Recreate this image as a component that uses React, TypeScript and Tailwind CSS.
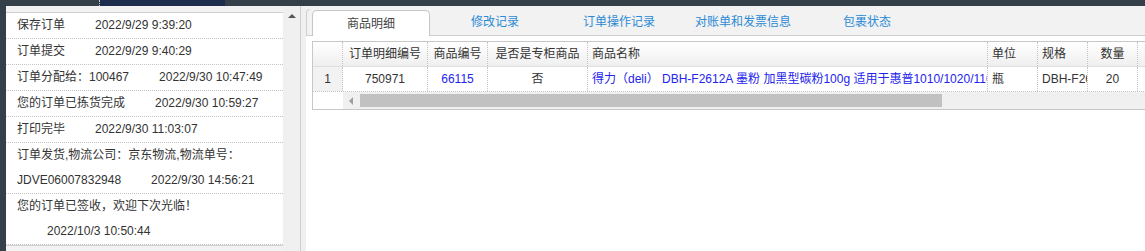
import React from "react";

const logs: { text: string; time: string; mode?: "wrapText" | "wrapTime"; second?: string }[] = [
  { text: "保存订单", time: "2022/9/29 9:39:20" },
  { text: "订单提交", time: "2022/9/29 9:40:29" },
  { text: "订单分配给：100467", time: "2022/9/30 10:47:49" },
  { text: "您的订单已拣货完成", time: "2022/9/30 10:59:27" },
  { text: "打印完毕", time: "2022/9/30 11:03:07" },
  { text: "订单发货,物流公司：京东物流,物流单号：", second: "JDVE06007832948", time: "2022/9/30 14:56:21", mode: "wrapText" },
  { text: "您的订单已签收，欢迎下次光临！", time: "2022/10/3 10:50:44", mode: "wrapTime" },
];

const tabs = ["商品明细", "修改记录", "订单操作记录", "对账单和发票信息", "包裹状态"];

const cols = [
  { w: "w-[30px]", title: "", align: "text-center" },
  { w: "w-[85px]", title: "订单明细编号", align: "text-center" },
  { w: "w-[60px]", title: "商品编号", align: "text-center" },
  { w: "w-[100px]", title: "是否是专柜商品", align: "text-center" },
  { w: "w-[400px]", title: "商品名称", align: "text-left pl-[4px]" },
  { w: "w-[50px]", title: "单位", align: "text-left pl-[4px]" },
  { w: "w-[50px]", title: "规格", align: "text-left pl-[4px]" },
  { w: "w-[50px]", title: "数量", align: "text-center" },
  { w: "w-[80px]", title: "", align: "text-center" },
];

const row = [
  { v: "1", c: "text-[#333]" },
  { v: "750971", c: "text-[#333]" },
  { v: "66115", c: "text-[#2323ee]" },
  { v: "否", c: "text-[#333]" },
  { v: "得力（deli） DBH-F2612A 墨粉 加黑型碳粉100g 适用于惠普1010/1020/1100/3050", c: "text-[#2323ee]" },
  { v: "瓶", c: "text-[#333]" },
  { v: "DBH-F2612A", c: "text-[#333]" },
  { v: "20", c: "text-[#333]" },
  { v: "", c: "" },
];

export default function App() {
  return (
    <div className="w-[1145px] h-[251px] overflow-hidden bg-white flex flex-col text-[12px] font-['Liberation_Sans','Noto_Sans_CJK_SC',sans-serif]">
      {/* top bar */}
      <div className="h-[6px] shrink-0 flex bg-[#343f4a]">
        <div className="w-[99px]" />
        <div className="w-px border-l border-dotted border-white/70" />
        <div className="w-[125px] bg-[#1b2c4d]" />
      </div>

      <div className="flex flex-1 min-h-0">
        <div className="w-[6px] shrink-0 bg-[#343f4a]" />

        {/* left log panel */}
        <div className="w-[277px] shrink-0 bg-[#f2f2f2] pt-[6px]">
          <div className="bg-white border-t border-b border-[#cfcfcf] text-[#333] leading-[25px]">
            {logs.map((l, i) => (
              <div key={i} className="pl-[11px] border-b border-dotted border-[#c4c4c4] whitespace-nowrap">
                {l.mode === "wrapText" ? (
                  <>
                    <div>{l.text}</div>
                    <div>
                      {l.second}
                      <span className="ml-[30px]">{l.time}</span>
                    </div>
                  </>
                ) : l.mode === "wrapTime" ? (
                  <>
                    <div>{l.text}</div>
                    <div className="pl-[30px]">{l.time}</div>
                  </>
                ) : (
                  <div>
                    {l.text}
                    <span className="ml-[30px]">{l.time}</span>
                  </div>
                )}
              </div>
            ))}
          </div>
        </div>

        {/* scrollbar */}
        <div className="w-[17px] shrink-0 bg-[#f0f0f0] flex justify-center pt-[8px]">
          <div className="w-0 h-0 border-x-[4px] border-x-transparent border-b-[4px] border-b-[#555]" />
        </div>
        <div className="w-px shrink-0 bg-[#cdcdcd]" />
        <div className="w-[5px] shrink-0 bg-[#f0f0f0]" />

        {/* right panel */}
        <div className="flex-1 min-w-0 flex flex-col overflow-hidden">
          <div className="h-[30px] shrink-0 bg-[#f2f2f2] border-b border-[#cfcfcf] flex items-end">
            <div className="w-[4px] h-[26px] border-l border-t border-[#cfcfcf] rounded-tl-[4px] self-end" />
            {tabs.map((t, i) =>
              i === 0 ? (
                <div
                  key={t}
                  className="ml-[2px] w-[118px] h-[26px] -mb-px bg-white border border-b-0 border-[#c6c6c6] rounded-t-[5px] flex items-center justify-center text-[#444] text-[12px]"
                >
                  {t}
                </div>
              ) : (
                <div key={t} className="ml-[6px] w-[118px] h-[26px] flex items-center justify-center text-[#2b8ad6] text-[12px]">
                  {t}
                </div>
              )
            )}
          </div>

          <div className="flex-1 bg-white pl-[6px] pt-[5px]">
            <div className="w-[1000px] border-t border-l border-b border-[#c8c8c8]">
              {/* header */}
              <div className="flex h-[25px] border-b border-[#dedede] bg-[linear-gradient(#ffffff,#efefef)] text-[#333]">
                {cols.map((c, i) => (
                  <div
                    key={i}
                    className={`${c.w} shrink-0 h-full border-r border-dotted border-[#c4c4c4] leading-[24px] whitespace-nowrap overflow-hidden ${c.align}`}
                  >
                    {c.title}
                  </div>
                ))}
              </div>
              {/* data row */}
              <div className="flex h-[25px] border-b border-dotted border-[#c4c4c4]">
                {cols.map((c, i) => (
                  <div
                    key={i}
                    className={`${c.w} shrink-0 h-full border-r border-dotted border-[#c4c4c4] leading-[24px] whitespace-nowrap overflow-hidden ${c.align} ${row[i].c} ${i === 0 ? "bg-[#f2f2f2]" : ""}`}
                  >
                    {row[i].v}
                  </div>
                ))}
              </div>
              {/* horizontal scrollbar */}
              <div className="flex h-[17px]">
                <div className="w-[30px] shrink-0 bg-white" />
                <div className="flex-1 bg-[#f0f0f0] flex items-center">
                  <div className="ml-[6px] w-0 h-0 border-y-[4px] border-y-transparent border-r-[4px] border-r-[#a0a0a0]" />
                  <div className="ml-[7px] w-[582px] h-[13px] bg-[#c1c1c1]" />
                </div>
              </div>
            </div>
          </div>
        </div>
      </div>
    </div>
  );
}
